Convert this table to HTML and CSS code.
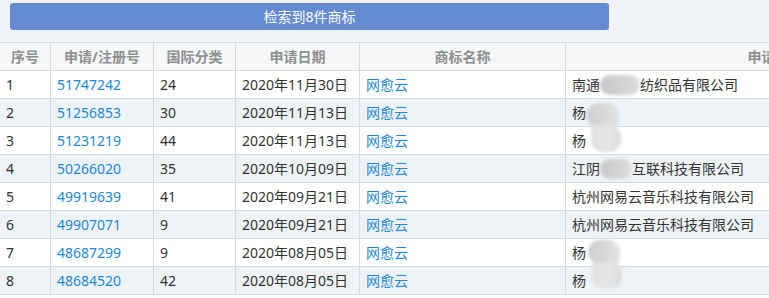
FILE: index.html
```html
<!DOCTYPE html>
<html lang="zh">
<head>
<meta charset="utf-8">
<link rel="stylesheet" href="styles.css">
</head>
<body>
<div class="page">
  <div class="toolbar">
    <div class="result-btn">检索到8件商标</div>
  </div>
  <div class="table-wrap">
    <table class="grid">
      <colgroup>
        <col class="c1"><col class="c2"><col class="c3"><col class="c4"><col class="c5"><col class="c6">
      </colgroup>
      <thead>
        <tr><th>序号</th><th>申请/注册号</th><th>国际分类</th><th>申请日期</th><th>商标名称</th><th>申请人名称</th></tr>
      </thead>
      <tbody>
        <tr><td>1</td><td><a class="lnk">51747242</a></td><td>24</td><td>2020年11月30日</td><td><a class="lnk">网愈云</a></td><td>南通<span class="mask w40"></span>纺织品有限公司</td></tr>
        <tr><td>2</td><td><a class="lnk">51256853</a></td><td>30</td><td>2020年11月13日</td><td><a class="lnk">网愈云</a></td><td class="rel">杨<span class="blob b1"></span></td></tr>
        <tr><td>3</td><td><a class="lnk">51231219</a></td><td>44</td><td>2020年11月13日</td><td><a class="lnk">网愈云</a></td><td>杨</td></tr>
        <tr><td>4</td><td><a class="lnk">50266020</a></td><td>35</td><td>2020年10月09日</td><td><a class="lnk">网愈云</a></td><td>江阴<span class="mask w32"></span>互联科技有限公司</td></tr>
        <tr><td>5</td><td><a class="lnk">49919639</a></td><td>41</td><td>2020年09月21日</td><td><a class="lnk">网愈云</a></td><td>杭州网易云音乐科技有限公司</td></tr>
        <tr><td>6</td><td><a class="lnk">49907071</a></td><td>9</td><td>2020年09月21日</td><td><a class="lnk">网愈云</a></td><td>杭州网易云音乐科技有限公司</td></tr>
        <tr><td>7</td><td><a class="lnk">48687299</a></td><td>9</td><td>2020年08月05日</td><td><a class="lnk">网愈云</a></td><td class="rel">杨<span class="blob b2"></span></td></tr>
        <tr><td>8</td><td><a class="lnk">48684520</a></td><td>42</td><td>2020年08月05日</td><td><a class="lnk">网愈云</a></td><td>杨</td></tr>
      </tbody>
    </table>
  </div>
</div>
</body>
</html>
```
FILE: styles.css
```css
html, body {
  margin: 0;
  padding: 0;
  background: #ffffff;
  overflow: hidden;
}
body {
  font-family: "Noto Sans", "Noto Sans CJK SC", sans-serif;
  font-size: 14px;
  color: #333333;
}
.page {
  width: 769px;
  overflow: hidden;
}
.toolbar {
  background: #f0f4f8;
  padding: 3px 0 12px 10px;
}
.result-btn {
  width: 599px;
  height: 27px;
  background: #648bd0;
  border-radius: 3px;
  color: #ffffff;
  font-size: 14px;
  line-height: 27px;
  text-align: center;
}
.table-wrap {
  width: 1000px;
  margin-left: -1px;
}
.grid {
  border-collapse: collapse;
  table-layout: fixed;
  width: 1000px;
}
.c1 { width: 51px; }
.c2 { width: 103px; }
.c3 { width: 82px; }
.c4 { width: 124px; }
.c5 { width: 206px; }
.c6 { width: 434px; }
.grid th, .grid td {
  border: 1px solid #d6d9dc;
  height: 27px;
  padding: 0 6px;
  white-space: nowrap;
  line-height: 20px;
}
.grid th {
  background: #f5f7f8;
  color: #8f8f8f;
  font-weight: bold;
  text-align: center;
  font-size: 14px;
}
.grid td {
  text-align: left;
  background: #ffffff;
}
.grid tbody tr:nth-child(even) td {
  background: #eef3f8;
}
.lnk {
  color: #1e88d0;
  text-decoration: none;
}
.rel {
  position: relative;
}
.mask {
  display: inline-block;
  height: 20px;
  vertical-align: -5px;
  border-radius: 10px;
  background: linear-gradient(90deg, #c8c8c8 0%, #d2d2d2 50%, #dcdcdc 100%);
  filter: blur(1.5px);
}
.w40 { width: 40px; }
.w32 { width: 32px; }
.blob {
  position: absolute;
  z-index: 2;
  left: 19px;
  top: 4px;
  width: 36px;
  height: 49px;
  filter: blur(1.5px);
}
.blob::before {
  content: "";
  position: absolute;
  left: 2px;
  top: 0;
  width: 32px;
  height: 24px;
  border-radius: 12px 12px 4px 12px;
  background: linear-gradient(90deg, #cfcfcf, #d8d8d8 50%, #e2e2e2);
}
.blob::after {
  content: "";
  position: absolute;
  left: 6px;
  top: 22px;
  width: 30px;
  height: 27px;
  border-radius: 4px 12px 12px 12px;
  background: linear-gradient(90deg, #e0e0e0, #e6e6e6 50%, #dddddd);
}
.b2 {
  top: 1px;
  left: 20px;
}
```
